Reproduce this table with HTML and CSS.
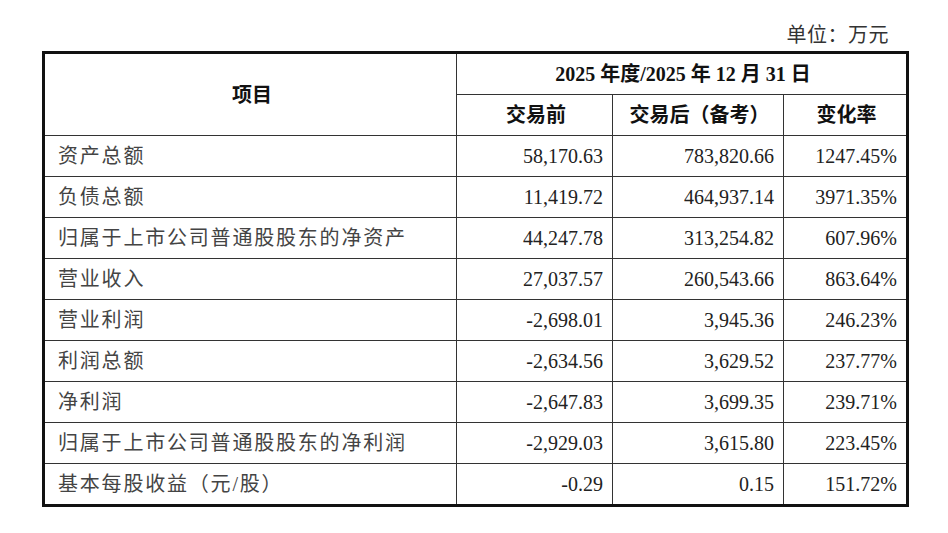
FILE: index.html
```html
<!DOCTYPE html>
<html lang="zh">
<head>
<meta charset="utf-8">
<link rel="stylesheet" href="styles.css">
</head>
<body>
<div class="page">
  <div class="unit">单位：万元</div>
  <table class="fin">
    <colgroup>
      <col class="c1"><col class="c2"><col class="c3"><col class="c4">
    </colgroup>
    <thead>
      <tr>
        <th rowspan="2" class="item-head">项目</th>
        <th colspan="3">2025 年度/2025 年 12 月 31 日</th>
      </tr>
      <tr>
        <th>交易前</th>
        <th>交易后（备考）</th>
        <th>变化率</th>
      </tr>
    </thead>
    <tbody>
      <tr><td class="name">资产总额</td><td>58,170.63</td><td>783,820.66</td><td>1247.45%</td></tr>
      <tr><td class="name">负债总额</td><td>11,419.72</td><td>464,937.14</td><td>3971.35%</td></tr>
      <tr><td class="name">归属于上市公司普通股股东的净资产</td><td>44,247.78</td><td>313,254.82</td><td>607.96%</td></tr>
      <tr><td class="name">营业收入</td><td>27,037.57</td><td>260,543.66</td><td>863.64%</td></tr>
      <tr><td class="name">营业利润</td><td>-2,698.01</td><td>3,945.36</td><td>246.23%</td></tr>
      <tr><td class="name">利润总额</td><td>-2,634.56</td><td>3,629.52</td><td>237.77%</td></tr>
      <tr><td class="name">净利润</td><td>-2,647.83</td><td>3,699.35</td><td>239.71%</td></tr>
      <tr><td class="name">归属于上市公司普通股股东的净利润</td><td>-2,929.03</td><td>3,615.80</td><td>223.45%</td></tr>
      <tr><td class="name">基本每股收益（元/股）</td><td>-0.29</td><td>0.15</td><td>151.72%</td></tr>
    </tbody>
  </table>
</div>
</body>
</html>
```

FILE: styles.css
```css
html, body {
  margin: 0;
  padding: 0;
  background: #fff;
}

.page {
  padding: 22px 0 0 42px;
  width: 864px;
  font-family: "Liberation Serif", "Noto Sans CJK SC", serif;
  color: #222;
}

.unit {
  text-align: right;
  font-size: 20px;
  line-height: 26px;
  padding-right: 17px;
  margin-bottom: 3px;
  color: #333;
  letter-spacing: 0.5px;
}

.fin {
  width: 864px;
  border-collapse: collapse;
  table-layout: fixed;
  border: 3px solid #111;
  font-size: 20px;
}

.c1 { width: 413px; }
.c2 { width: 156px; }
.c3 { width: 171px; }
.c4 { width: 124px; }

.fin th,
.fin td {
  border: 1px solid #333;
  height: 40px;
  padding: 0 9px 0 12px;
  line-height: 24px;
  white-space: nowrap;
}

.fin th {
  font-weight: bold;
  text-align: center;
  color: #111;
}

.fin td {
  text-align: right;
  color: #222;
}

.fin td.name {
  text-align: left;
  letter-spacing: 1.8px;
  color: #444;
  padding-left: 13px;
}
```
